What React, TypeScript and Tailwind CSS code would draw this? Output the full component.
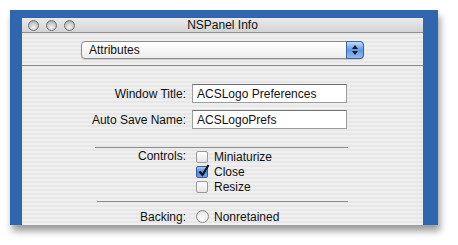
import React from 'react'

const font = { fontFamily: '"Liberation Sans", Arial, sans-serif' }

function Light() {
  return (
    <div className="w-[11px] h-[11px] rounded-full border border-[#6d6d6d] bg-[radial-gradient(circle_at_50%_70%,#f4f4f4_0%,#c9c9c9_55%,#9a9a9a_100%)]" />
  )
}

function Checkbox({ checked }: { checked?: boolean }) {
  return (
    <div
      className={`relative w-[12px] h-[12px] rounded-[2px] border ${
        checked
          ? 'border-[#3a5f9a] bg-[linear-gradient(#a9cbf2,#4d8be0_50%,#6fa6ec)]'
          : 'border-[#9a9a9a] bg-[linear-gradient(#ffffff,#e6e6e6)]'
      }`}
    >
      {checked && (
        <svg className="absolute left-[1px] -top-[3px]" width="12" height="13" viewBox="0 0 12 13">
          <path d="M1.5 7.5 L4.5 11 L10.5 1" fill="none" stroke="#111" strokeWidth="2.2" />
        </svg>
      )}
    </div>
  )
}

function Field({ label, value }: { label: string; value: string }) {
  return (
    <div className="flex items-center">
      <div className="w-[170px] pr-[6px] text-right">{label}</div>
      <div className="w-[155px] h-[19px] flex items-center px-[4px] bg-white border border-[#9c9c9c] border-t-[#6f6f6f]">
        {value}
      </div>
    </div>
  )
}

export default function App() {
  return (
    <div className="w-[458px] h-[245px] bg-white pt-[10px] pl-[10px] text-[12px] text-[#111]" style={font}>
      <div className="w-[428px] h-[215px] bg-[#2f66ae] pt-[8px] pl-[12px] shadow-[2px_6px_7px_rgba(0,0,0,0.4)]">
        <div className="w-[401px] h-[207px] flex flex-col bg-[repeating-linear-gradient(0deg,#efefef_0px,#efefef_2px,#e7e7e7_2px,#e7e7e7_4px)]">
          {/* title bar */}
          <div className="relative h-[16px] flex items-center border-b border-[#8f8f8f] bg-[linear-gradient(#eaeaea,#d4d4d4)]">
            <div className="flex gap-[7px] pl-[6px]">
              <Light />
              <Light />
              <Light />
            </div>
            <div className="absolute inset-0 flex items-center justify-center text-[12px] text-[#111]">NSPanel Info</div>
          </div>

          {/* popup */}
          <div className="mt-[8px] ml-[59px] w-[283px] h-[18px] flex rounded-[4px] border border-[#8a8a8a] bg-[linear-gradient(#ffffff,#ededed)] shadow-[0_1px_1px_rgba(0,0,0,0.15)]">
            <div className="flex-1 flex items-center pl-[7px]">Attributes</div>
            <div className="w-[18px] -my-px -mr-px rounded-r-[4px] border border-[#3c62a0] bg-[linear-gradient(#c3dcf8,#5d98e6_50%,#8ebdf3)] flex flex-col items-center justify-center gap-[2px]">
              <svg width="6" height="4" viewBox="0 0 6 4"><path d="M0 4 L3 0 L6 4Z" fill="#1a1a1a" /></svg>
              <svg width="6" height="4" viewBox="0 0 6 4"><path d="M0 0 L3 4 L6 0Z" fill="#1a1a1a" /></svg>
            </div>
          </div>

          <div className="mt-[6px] h-px bg-[#8d8d8d]" />

          <div className="mt-[18px] flex flex-col gap-[7px]">
            <Field label="Window Title:" value="ACSLogo Preferences" />
            <Field label="Auto Save Name:" value="ACSLogoPrefs" />
          </div>

          <div className="mt-[18px] ml-[73px] w-[253px] h-px bg-[#8d8d8d]" />

          <div className="mt-[1px] flex">
            <div className="w-[170px] pr-[6px] text-right leading-[15px]">Controls:</div>
            <div className="flex flex-col pl-[4px]">
              {[
                ['Miniaturize', false],
                ['Close', true],
                ['Resize', false],
              ].map(([t, c]) => (
                <div key={t as string} className="h-[15px] flex items-center gap-[6px]">
                  <Checkbox checked={c as boolean} />
                  <span>{t as string}</span>
                </div>
              ))}
            </div>
          </div>

          <div className="mt-[7px] ml-[75px] w-[251px] h-px bg-[#8d8d8d]" />

          <div className="mt-[7px] h-[16px] flex items-center">
            <div className="w-[170px] pr-[6px] text-right">Backing:</div>
            <div className="flex items-center gap-[5px] pl-[4px]">
              <div className="w-[13px] h-[13px] rounded-full border border-[#8a8a8a] bg-[radial-gradient(circle_at_50%_75%,#ffffff_0%,#ececec_60%,#cfcfcf_100%)]" />
              <span>Nonretained</span>
            </div>
          </div>
        </div>
      </div>
    </div>
  )
}
